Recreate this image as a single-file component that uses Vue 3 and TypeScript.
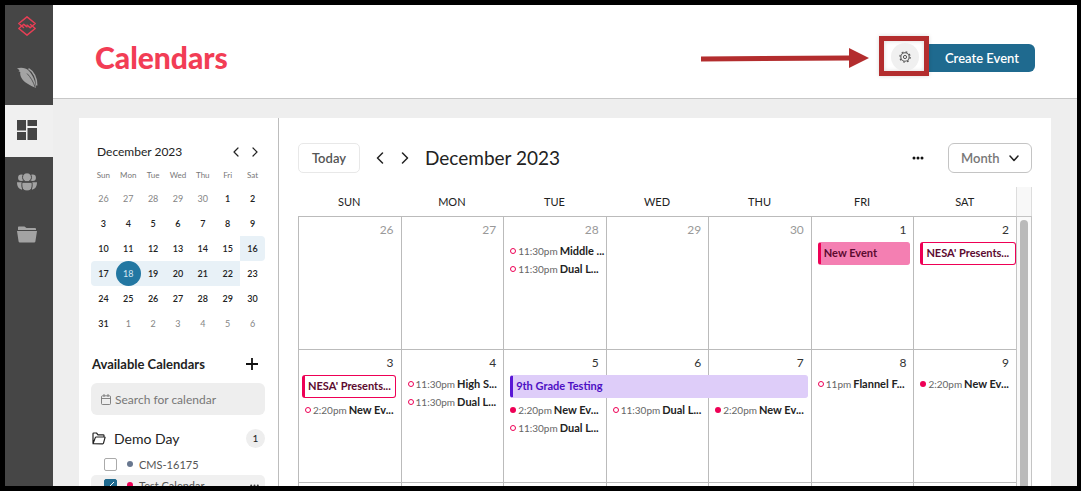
<script setup lang="ts">
import { ref } from 'vue'

interface CalendarEvent {
  kind: 'ring' | 'dot' | 'filled' | 'outlined' | 'span' | 'spacer'
  time?: string
  title?: string
}
interface Day {
  label: number
  muted?: boolean
  events: CalendarEvent[]
}

const weekdays: string[] = ['Sun', 'Mon', 'Tue', 'Wed', 'Thu', 'Fri', 'Sat']

const miniWeeks: number[][] = [
  [26, 27, 28, 29, 30, 1, 2],
  [3, 4, 5, 6, 7, 8, 9],
  [10, 11, 12, 13, 14, 15, 16],
  [17, 18, 19, 20, 21, 22, 23],
  [24, 25, 26, 27, 28, 29, 30],
  [31, 1, 2, 3, 4, 5, 6],
]

function miniClass(week: number, day: number) {
  return {
    muted: (week === 0 && day > 20) || (week === 5 && day < 20),
    range: (week === 2 && day === 16) || (week === 3 && day < 23),
    first: day === 17,
    single: week === 2 && day === 16,
    selected: week === 3 && day === 18,
  }
}

const weeks: Day[][] = [
  [
    { label: 26, muted: true, events: [] },
    { label: 27, muted: true, events: [] },
    {
      label: 28,
      muted: true,
      events: [
        { kind: 'ring', time: '11:30pm', title: 'Middle ...' },
        { kind: 'ring', time: '11:30pm', title: 'Dual L...' },
      ],
    },
    { label: 29, muted: true, events: [] },
    { label: 30, muted: true, events: [] },
    { label: 1, events: [{ kind: 'filled', title: 'New Event' }] },
    { label: 2, events: [{ kind: 'outlined', title: "NESA' Presents..." }] },
  ],
  [
    {
      label: 3,
      events: [
        { kind: 'outlined', title: "NESA' Presents..." },
        { kind: 'ring', time: '2:20pm', title: 'New Ev...' },
      ],
    },
    {
      label: 4,
      events: [
        { kind: 'ring', time: '11:30pm', title: 'High S...' },
        { kind: 'ring', time: '11:30pm', title: 'Dual L...' },
      ],
    },
    {
      label: 5,
      events: [
        { kind: 'span', title: '9th Grade Testing' },
        { kind: 'dot', time: '2:20pm', title: 'New Ev...' },
        { kind: 'ring', time: '11:30pm', title: 'Dual L...' },
      ],
    },
    { label: 6, events: [{ kind: 'spacer' }, { kind: 'ring', time: '11:30pm', title: 'Dual L...' }] },
    { label: 7, events: [{ kind: 'spacer' }, { kind: 'dot', time: '2:20pm', title: 'New Ev...' }] },
    { label: 8, events: [{ kind: 'ring', time: '11pm', title: 'Flannel F...' }] },
    { label: 9, events: [{ kind: 'dot', time: '2:20pm', title: 'New Ev...' }] },
  ],
]

const view = ref('Month')
const search = ref('')
const cmsOn = ref(false)
const testOn = ref(true)
</script>

<template>
  <div class="app">
    <nav class="rail" aria-label="Main">
      <a class="logo" href="#" aria-label="Home">
        <svg width="20" height="22" viewBox="0 0 20 22" fill="none" stroke="#e63f55" stroke-width="1.500" stroke-linejoin="round" stroke-linecap="round">
          <path d="M6.500 12.500 1.800 8.500 10 1.800l8.200 6.700-5 4.200L10 10.200" />
          <path d="M13.500 9.500l4.700 4L10 20.200l-8.200-6.700 5-4.200L10 11.800" />
        </svg>
      </a>
      <a class="item" href="#" aria-label="Content">
        <svg width="22" height="22" viewBox="0 0 22 22" fill="#a3a3a3">
          <path d="M1 1.300C5 .2 10 .7 12.500 3.500 17 8 19.300 14 20 20.800 14 18.500 7.500 15.500 5 10 4.200 8 4 6.500 4.300 5L2.500 4.300 3.600 3.200z" />
          <path d="M12.500 1.600C17.500 4.500 21 11 20.700 18.500" fill="none" stroke="#a3a3a3" stroke-width="1.500" />
          <path d="M11 6.500C14.500 10 17.500 15 19 20" fill="none" stroke="#464646" stroke-width=".8" />
        </svg>
      </a>
      <a class="item active" href="#" aria-label="Calendars" aria-current="page">
        <svg width="20" height="20" viewBox="0 0 20 20" fill="#444">
          <path d="M0 0h9v10.500H0zM10.500 0H20v6h-9.500zM0 12h9v8H0zM10.500 8H20v12h-9.500z" />
        </svg>
      </a>
      <a class="item" href="#" aria-label="People">
        <svg width="20" height="18" viewBox="0 0 20 18" fill="#a3a3a3">
          <circle cx="4.300" cy="4.800" r="3.200" />
          <circle cx="15.700" cy="4.800" r="3.200" />
          <path d="M0 9.300h5v7.400C1.500 16.200 0 13 0 9.300zM20 9.300h-5v7.400c3.500-.5 5-3.700 5-7.400z" />
          <g stroke="#464646" stroke-width="1">
            <circle cx="10" cy="4.300" r="4.500" />
            <path d="M5 9.300h10c.5 3.500 0 6.500-1.500 7.700-2 1.300-5 1.300-7 0C5 15.800 4.500 12.800 5 9.300z" />
          </g>
        </svg>
      </a>
      <a class="item" href="#" aria-label="Files">
        <svg width="20" height="17" viewBox="0 0 20 17" fill="#a3a3a3">
          <path d="M1 4V1.200Q1 .5 1.800.5H7.500L9.500 2H18q1 0 1 1v1z" />
          <path d="M0 5h20l-1.600 10.500q-.2 1-1.200 1H2.800q-1 0-1.200-1z" />
        </svg>
      </a>
    </nav>

    <div class="page">
      <header class="top">
        <h1>Calendars</h1>
        <div class="actions">
          <div class="callout">
            <svg class="arrow" width="170" height="24" viewBox="0 0 170 24" aria-hidden="true">
              <path d="M1 10.500 149 9.500V2l20 10-20 10v-7.500L1 15.500z" fill="#b32d2e" />
            </svg>
            <button class="gear" type="button" aria-label="Settings">
              <svg width="12" height="12" viewBox="0 0 12 12" fill="none" stroke="#555">
                <circle cx="6" cy="6" r="4.200" stroke-width="1.100" />
                <circle cx="6" cy="6" r="1.600" stroke-width="1" />
                <circle cx="6" cy="6" r="5.200" stroke-width="1.100" stroke-dasharray="1.800 2.284" />
              </svg>
            </button>
          </div>
          <button class="create" type="button">Create Event</button>
        </div>
      </header>

      <main class="body">
        <div class="card">
          <aside class="side">
            <div class="mini-head">
              <span>December 2023</span>
              <div class="mini-nav">
                <button type="button" aria-label="Previous month">
                  <svg width="6" height="10" viewBox="0 0 6 10"><path d="M5 1 1 5l4 4" /></svg>
                </button>
                <button type="button" aria-label="Next month">
                  <svg width="6" height="10" viewBox="0 0 6 10"><path d="m1 1 4 4-4 4" /></svg>
                </button>
              </div>
            </div>
            <table class="mini">
              <thead>
                <tr><th v-for="d in weekdays" :key="d" scope="col">{{ d }}</th></tr>
              </thead>
              <tbody>
                <tr v-for="(week, w) in miniWeeks" :key="w">
                  <td v-for="d in week" :key="d" :class="miniClass(w, d)"><span>{{ d }}</span></td>
                </tr>
              </tbody>
            </table>

            <div class="avail">
              <h2>Available Calendars</h2>
              <button type="button" aria-label="Add calendar">
                <svg width="12" height="12" viewBox="0 0 12 12"><path d="M6 0v12M0 6h12" stroke="#111" stroke-width="1.800" /></svg>
              </button>
            </div>
            <label class="search">
              <svg width="10" height="11" viewBox="0 0 10 11" fill="none" stroke="#777" stroke-width=".9">
                <rect x=".5" y="1.800" width="9" height="8.700" rx="1" /><path d="M.5 4.500h9M3 0v3M7 0v3" />
              </svg>
              <input v-model="search" type="text" placeholder="Search for calendar" aria-label="Search for calendar" />
            </label>
            <div class="folder">
              <svg width="14" height="13" viewBox="0 0 14 13" fill="none" stroke="#222" stroke-width="1.200" stroke-linejoin="round">
                <path d="M1 11V1.700Q1 1 1.700 1H4.500L6 2.800h5.200q.8 0 .8.800V5M1 11.700 3.300 5.600Q3.500 5 4.200 5h8.300q.7 0 .5.700l-1.500 5.400q-.2.700-.9.700z" />
              </svg>
              <span class="folder-name">Demo Day</span>
              <span class="count">1</span>
            </div>
            <label class="cal">
              <input v-model="cmsOn" type="checkbox" />
              <i class="bullet slate"></i><span>CMS-16175</span>
            </label>
            <label class="cal hovered">
              <input v-model="testOn" type="checkbox" />
              <i class="bullet pink"></i><span>Test Calendar</span>
              <svg class="more" width="9" height="3" viewBox="0 0 9 3" fill="#444"><circle cx="1.200" cy="1.500" r="1" /><circle cx="4.500" cy="1.500" r="1" /><circle cx="7.800" cy="1.500" r="1" /></svg>
            </label>
          </aside>

          <section class="main">
            <div class="toolbar">
              <button class="today" type="button">Today</button>
              <div class="steps">
                <button type="button" aria-label="Previous">
                  <svg width="8" height="12" viewBox="0 0 8 12"><path d="M6.500 1 1.500 6l5 5" /></svg>
                </button>
                <button type="button" aria-label="Next">
                  <svg width="8" height="12" viewBox="0 0 8 12"><path d="m1.500 1 5 5-5 5" /></svg>
                </button>
              </div>
              <h2>December 2023</h2>
              <button class="dots" type="button" aria-label="More options">
                <svg width="12" height="4" viewBox="0 0 12 4" fill="#111"><circle cx="2" cy="2" r="1.500" /><circle cx="6" cy="2" r="1.500" /><circle cx="10" cy="2" r="1.500" /></svg>
              </button>
              <div class="view">
                <select v-model="view" aria-label="View">
                  <option>Month</option>
                  <option>Week</option>
                  <option>Day</option>
                </select>
                <svg width="10" height="7" viewBox="0 0 10 7"><path d="m1 1 4 4.500L9 1" /></svg>
              </div>
            </div>

            <div class="board">
              <table class="grid">
                <thead>
                  <tr><th v-for="d in weekdays" :key="d" scope="col">{{ d.toUpperCase() }}</th></tr>
                </thead>
                <tbody>
                  <tr v-for="(week, w) in weeks" :key="w">
                    <td v-for="day in week" :key="day.label">
                      <div class="num" :class="{ muted: day.muted }">{{ day.label }}</div>
                      <template v-for="(e, i) in day.events" :key="i">
                        <div v-if="e.kind === 'spacer'" class="spacer"></div>
                        <a v-else-if="e.kind === 'ring' || e.kind === 'dot'" href="#" class="timed">
                          <i :class="e.kind"></i><time>{{ e.time }}</time><b>{{ e.title }}</b>
                        </a>
                        <a v-else href="#" class="chip" :class="e.kind">{{ e.title }}</a>
                      </template>
                    </td>
                  </tr>
                  <tr>
                    <td v-for="d in weekdays" :key="d"></td>
                  </tr>
                </tbody>
              </table>
              <div class="scroll">
                <div class="scroll-head"></div>
                <div class="track"><div class="thumb"></div></div>
              </div>
            </div>
          </section>
        </div>
      </main>
    </div>
  </div>
</template>

<style>
body {
  margin: 0;
  background: #000;
}
</style>

<style scoped>
* {
  box-sizing: border-box;
}
.app {
  height: 100vh;
  border: 5px solid #000;
  border-right-width: 4px;
  display: flex;
  overflow: hidden;
  font-family: Lato, "Open Sans", sans-serif;
  color: #222;
  background: #eee;
}
button {
  font: inherit;
  border: 0;
  padding: 0;
  background: none;
  color: inherit;
  display: flex;
  align-items: center;
  justify-content: center;
}
a {
  color: inherit;
  text-decoration: none;
}
h1,
h2 {
  margin: 0;
}
svg {
  flex: none;
}
table {
  border-spacing: 0;
  table-layout: fixed;
}
th,
td {
  padding: 0;
}

.rail {
  width: 48px;
  flex: none;
  background: #464646;
}
.logo,
.item {
  display: flex;
  align-items: center;
  justify-content: center;
  height: 52px;
  padding: 0 4px 2px 0;
}
.logo {
  height: 48px;
  padding-bottom: 7px;
}
.item.active {
  background: #f0f0f0;
}

.page {
  flex: 1;
  min-width: 0;
  display: flex;
  flex-direction: column;
}
.top {
  flex: none;
  height: 94px;
  background: #fff;
  border-bottom: 1px solid #c8c8c8;
  display: flex;
  align-items: center;
  justify-content: space-between;
  padding: 11px 42px 0;
}
h1 {
  font-size: 30px;
  line-height: 36px;
  font-weight: 900;
  color: #f23d55;
}
.actions {
  display: flex;
  align-items: flex-start;
}
.callout {
  position: relative;
  width: 50px;
  height: 40px;
  border: 5px solid #b32d2e;
  box-shadow: 0 0 4px rgba(0, 0, 0, 0.15), inset 0 0 4px rgba(0, 0, 0, 0.15);
  display: flex;
  align-items: center;
  justify-content: center;
  padding: 2px 0 0 2px;
  margin-bottom: 2px;
}
.arrow {
  position: absolute;
  right: 54px;
  top: 5px;
}
.gear {
  width: 28px;
  height: 28px;
  border-radius: 14px;
  background: #f0f0f0;
}
.create {
  height: 28px;
  width: 106px;
  margin-top: 8px;
  border-radius: 0 6px 6px 0;
  background: #1f6a8f;
  color: #fff;
  font-size: 13px;
  font-weight: 600;
}

.body {
  flex: 1;
  min-height: 0;
  padding: 19px 26px 0;
}
.card {
  height: 100%;
  background: #fff;
  display: flex;
  overflow: hidden;
}
.side {
  width: 200px;
  flex: none;
  padding: 22px 13px 0 12px;
  border-right: 1px solid #bdbdbd;
}
.mini-head {
  height: 24px;
  padding: 0 7px 0 6px;
  display: flex;
  align-items: center;
  justify-content: space-between;
  font-size: 12px;
  line-height: 14px;
}
.mini-nav {
  display: flex;
  gap: 13px;
}
.mini-nav path,
.steps path,
.view path {
  fill: none;
  stroke: #222;
  stroke-width: 1.500;
  stroke-linecap: round;
  stroke-linejoin: round;
}
.mini-nav path {
  stroke-width: 1.200;
}
.mini {
  width: 100%;
  text-align: center;
  font-size: 9px;
}
.mini th {
  height: 22px;
  font-size: 8px;
  font-weight: 400;
  color: #777;
}
.mini td {
  height: 25px;
  font-weight: 600;
  color: #222;
}
.mini td span {
  display: block;
  line-height: 25px;
}
.mini .muted {
  font-weight: 400;
  color: #858585;
}
.mini .range {
  background: #e8f1f7;
}
.mini .first {
  border-radius: 4px 0 0 4px;
}
.mini .single {
  border-radius: 0 4px 4px 0;
}
.mini .selected span {
  border-radius: 50%;
  background: #2277a2;
  color: #d6e8f2;
  font-weight: 400;
}

.avail {
  margin-top: 16px;
  height: 24px;
  padding: 0 7px 0 1px;
  display: flex;
  align-items: center;
  justify-content: space-between;
}
.avail h2 {
  font-size: 13px;
  line-height: 16px;
  font-weight: 700;
}
.search {
  margin-top: 7px;
  height: 32px;
  padding: 0 10px;
  border-radius: 6px;
  background: #eee;
  display: flex;
  align-items: center;
  gap: 4px;
}
.search input {
  flex: 1;
  min-width: 0;
  border: 0;
  padding: 0;
  outline: 0;
  background: none;
  font: inherit;
  font-size: 12px;
  color: #333;
}
.search input::placeholder {
  color: #777;
}
.folder {
  margin-top: 13px;
  height: 20px;
  padding-left: 1px;
  display: flex;
  align-items: center;
  gap: 8px;
  font-size: 14px;
}
.folder-name {
  flex: 1;
}
.count {
  width: 19px;
  height: 19px;
  border-radius: 50%;
  background: #eee;
  font-size: 10px;
  line-height: 19px;
  text-align: center;
}
.cal {
  height: 22px;
  margin-top: 5px;
  padding: 0 6px 0 13px;
  display: flex;
  align-items: center;
  font-size: 11px;
  color: #555;
}
.cal.hovered {
  margin-top: 0;
  height: 20px;
  border-radius: 5px 5px 0 0;
  background: #f0f0f0;
}
.cal input {
  appearance: none;
  width: 13px;
  height: 13px;
  margin: 0;
  border: 1px solid #aaa;
  border-radius: 2px;
  background: #fff;
}
.cal input:checked {
  border-color: #1f6a8f;
  background: linear-gradient(135deg, transparent 45%, #fff 45%, #fff 55%, transparent 55%) 3px 2px / 6px 6px no-repeat #1f6a8f;
}
.bullet {
  width: 6px;
  height: 6px;
  border-radius: 50%;
  margin: 0 6px 0 10px;
}
.slate {
  background: #68778f;
}
.pink {
  background: #ee0055;
}
.more {
  margin-left: auto;
}

.main {
  flex: 1;
  min-width: 0;
  padding: 25px 19px 0;
}
.toolbar {
  height: 30px;
  display: flex;
  align-items: center;
}
.today {
  width: 62px;
  height: 30px;
  border: 1px solid #e8e8e8;
  border-radius: 5px;
  font-size: 13px;
  font-weight: 600;
  color: #555;
}
.steps {
  display: flex;
  gap: 17px;
  margin: 0 16px;
}
.toolbar h2 {
  font-size: 19px;
  line-height: 24px;
  font-weight: 400;
}
.dots {
  margin-left: auto;
  margin-right: 24px;
  height: 20px;
}
.view {
  position: relative;
  width: 84px;
  height: 30px;
}
.view select {
  appearance: none;
  width: 100%;
  height: 100%;
  padding: 0 12px;
  border: 1px solid #c4c4c4;
  border-radius: 6px;
  background: #fff;
  font: inherit;
  font-size: 13px;
  font-weight: 600;
  color: #777;
}
.view svg {
  position: absolute;
  right: 13px;
  top: 12px;
  pointer-events: none;
}

.board {
  margin-top: 14px;
  display: flex;
}
.grid {
  flex: 1;
  width: 100%;
  min-width: 0;
}
.grid th {
  height: 29px;
  font-size: 11px;
  font-weight: 400;
}
.grid td {
  height: 133px;
  border-top: 1px solid #bbb;
  border-left: 1px solid #bbb;
  vertical-align: top;
  padding: 0 3px 0 6px;
}
.num {
  height: 25px;
  padding-right: 4px;
  font-size: 12px;
  line-height: 26px;
  text-align: right;
  color: #333;
}
.num.muted {
  color: #999;
}
.timed {
  display: flex;
  align-items: center;
  height: 18px;
  font-size: 10px;
  line-height: 16px;
  white-space: nowrap;
}
.timed i {
  flex: none;
  width: 6px;
  height: 6px;
  border-radius: 50%;
  margin-right: 2px;
}
.ring {
  border: 1px solid #ee0055;
}
.dot {
  background: #ee0055;
}
.timed time {
  color: #666;
  margin-right: 2px;
}
.timed b {
  font-size: 11px;
  font-weight: 700;
  color: #222;
}
.chip {
  display: block;
  position: relative;
  height: 23px;
  margin-bottom: 3px;
  padding-left: 3px;
  border: 1px solid #ee0055;
  border-left-width: 3px;
  border-radius: 3px;
  font-size: 11px;
  font-weight: 700;
  line-height: 20px;
  white-space: nowrap;
  color: #5c0a30;
}
td:first-child .chip {
  margin-left: -3px;
  margin-right: 2px;
}
td:last-child .chip {
  margin-right: -3px;
}
.filled {
  background: #f47fb2;
  border-color: #f47fb2;
  border-left-color: #ee0055;
}
.span {
  z-index: 1;
  width: calc(300% + 20px);
  background: #decdf9;
  border-color: #decdf9;
  border-left-color: #5a17d6;
  color: #4d0fc4;
}
.spacer {
  height: 26px;
}
.scroll {
  width: 16px;
  flex: none;
  display: flex;
  flex-direction: column;
}
.scroll-head {
  height: 29px;
  background: #f8f8f8;
  border: solid #ddd;
  border-width: 0 1px;
}
.track {
  flex: 1;
  padding: 3px;
  background: #fafafa;
  border: 1px solid #c4c4c4;
  border-bottom: 0;
}
.thumb {
  height: 100%;
  border-radius: 4px;
  background: #bababa;
}
</style>
